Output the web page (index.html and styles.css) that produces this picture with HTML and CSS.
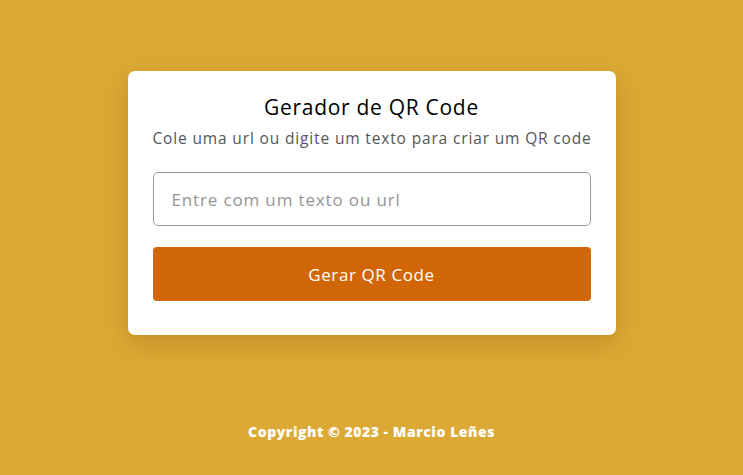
FILE: index.html
```html
<!DOCTYPE html>
<html lang="pt-BR">
<head>
<meta charset="utf-8">
<title>Gerador de QR Code</title>
<link rel="stylesheet" href="styles.css">
</head>
<body>
<main class="page">
  <section class="card">
    <h1 class="title">Gerador de QR Code</h1>
    <p class="subtitle">Cole uma url ou digite um texto para criar um QR code</p>
    <input class="field" type="text" placeholder="Entre com um texto ou url">
    <button class="btn" type="button">Gerar QR Code</button>
  </section>
</main>
<footer class="footer">Copyright © 2023 - Marcio Leñes</footer>
</body>
</html>
```

FILE: styles.css
```css
* { box-sizing: border-box; }
html, body { margin: 0; padding: 0; }
body {
  background: #dca934;
  font-family: "Open Sans", "Noto Sans", sans-serif;
  width: 743px;
  height: 475px;
  display: flex;
  flex-direction: column;
  align-items: center;
}
.page {
  padding-top: 71px;
  display: flex;
  justify-content: center;
}
.card {
  width: 488px;
  height: 264px;
  background: #fff;
  border-radius: 7px;
  padding: 22px 25px 0;
  box-shadow: 0 8px 24px rgba(120, 80, 0, 0.28);
  display: flex;
  flex-direction: column;
  align-items: stretch;
}
.title {
  margin: 0;
  font-size: 21px;
  font-weight: 500;
  letter-spacing: 0.7px;
  color: #000;
  text-align: center;
  line-height: 28px;
}
.subtitle {
  margin: 5px 0 0;
  font-size: 15.5px;
  letter-spacing: 0.85px;
  color: #555;
  text-align: center;
  line-height: 24px;
  white-space: nowrap;
}
.field {
  margin-top: 22px;
  height: 54px;
  border: 1px solid #9a9a9a;
  border-radius: 5px;
  padding: 0 18px;
  font-family: inherit;
  font-size: 17px;
  letter-spacing: 0.85px;
  color: #333;
  outline: none;
}
.field::placeholder { color: #959595; }
.btn {
  margin-top: 21px;
  height: 54px;
  border: none;
  border-radius: 4px;
  background: #d16606;
  color: #fff;
  font-family: inherit;
  font-size: 17px;
  letter-spacing: 0.6px;
}
.footer {
  margin-top: 87px;
  color: #fff;
  font-weight: 800;
  font-size: 14px;
  letter-spacing: 0.55px;
}
```
